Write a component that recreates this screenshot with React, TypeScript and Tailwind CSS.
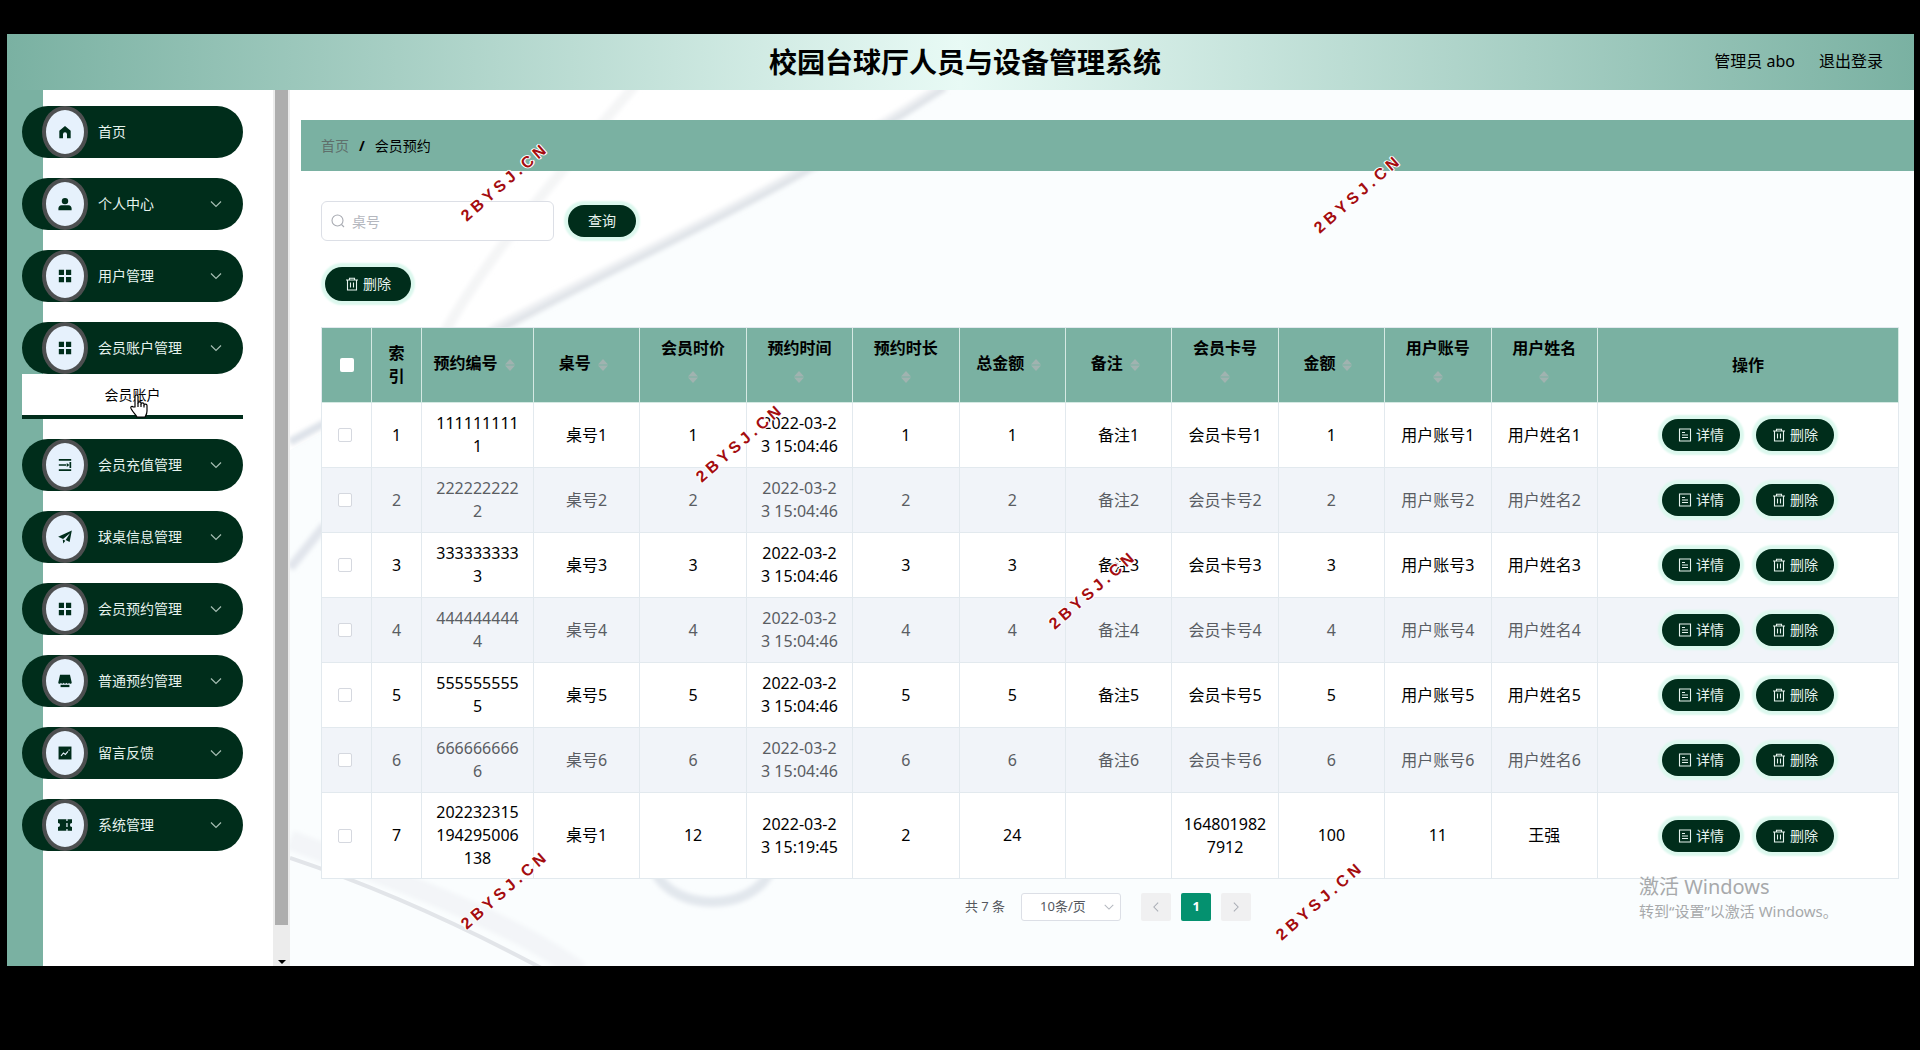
import { ComponentType, FC, memo, ReactNode } from "react";
import clsx from "clsx";

type IconProps = { className?: string };

const SolidIcon: FC<{ children: ReactNode }> = ({ children }) => (
  <svg aria-hidden className="size-3.5" fill="currentColor" viewBox="0 0 1024 1024">
    {children}
  </svg>
);

const HomeIcon = () => (
  <SolidIcon>
    <path d="M512 64 96 420v540h270V680a146 146 0 0 1 292 0v280h270V420z" />
  </SolidIcon>
);

const UserIcon = () => (
  <SolidIcon>
    <circle cx="512" cy="300" r="236" />
    <path d="M30 960V840c0-130 90-240 220-240h524c130 0 220 110 220 240v120z" />
  </SolidIcon>
);

const GridIcon = () => (
  <SolidIcon>
    <path d="M60 60h380v380H60zM584 60h380v380H584zM60 584h380v380H60zM584 584h380v380H584z" />
  </SolidIcon>
);

const ListIcon = () => (
  <SolidIcon>
    <path d="M60 80h904v130H60zM60 450h540v124H60zM60 820h904v130H60zM840 290h124v450H840z" />
    <path d="M640 370v284l190-142z" />
  </SolidIcon>
);

const SendIcon = () => (
  <SolidIcon>
    <path d="M10 500 1010 40 850 870 560 740 880 230 370 650zM350 700l190 90-160 190z" />
  </SolidIcon>
);

const ShopIcon = () => (
  <SolidIcon>
    <path d="M150 60h724l130 560c0 60-40 90-90 90s-90-30-100-70c-20 40-60 70-100 70s-80-30-100-70c-20 40-60 70-102 70s-80-30-102-70c-20 40-60 70-100 70s-80-30-100-70c-10 40-50 70-100 70S20 680 20 620z" />
    <path d="M190 790h644v170H190z" />
  </SolidIcon>
);

const ChartIcon = () => (
  <SolidIcon>
    <path d="M40 40h944v944H40z" />
    <path
      d="M220 720 400 510l140 110 190-220M780 340l60-70"
      fill="none"
      stroke="#e6f1fc"
      strokeWidth="80"
    />
  </SolidIcon>
);

const TicketIcon = () => (
  <SolidIcon>
    <path d="M0 90h610v130h90V90h324v270a152 152 0 0 0 0 304v270H700V804h-90v130H0V664a152 152 0 0 0 0-304zM610 360v304h90V360z" />
  </SolidIcon>
);

const ChevronIcon: FC<IconProps> = ({ className }) => (
  <svg
    aria-hidden
    className={className}
    fill="none"
    stroke="currentColor"
    strokeWidth="1.2"
    viewBox="0 0 14 14"
  >
    <path d="m2 4.5 5 5 5-5" />
  </svg>
);

const TrashIcon = () => (
  <svg
    aria-hidden
    className="size-3.5"
    fill="none"
    stroke="currentColor"
    strokeWidth="1.1"
    viewBox="0 0 14 14"
  >
    <path d="M1 3h12M4.500 3V1.200h5V3M2.500 3v10h9V3M5.500 5.500v5M8.500 5.500v5" />
  </svg>
);

const DocumentIcon = () => (
  <svg
    aria-hidden
    className="size-3.5"
    fill="none"
    stroke="currentColor"
    strokeWidth="1.1"
    viewBox="0 0 14 14"
  >
    <path d="M1.500 1h11v12h-11zM4 4.500h3M4 7h6M4 9.500h6" />
  </svg>
);

const SearchIcon: FC<IconProps> = ({ className }) => (
  <svg
    aria-hidden
    className={className}
    fill="none"
    stroke="currentColor"
    strokeWidth="1.1"
    viewBox="0 0 14 14"
  >
    <circle cx="6.5" cy="6.5" r="5.5" />
    <path d="m10.500 10.500 2.500 2.500" />
  </svg>
);

const SortCaret = () => (
  <span className="inline-flex h-[34px] w-6 items-center justify-center align-middle">
    <svg aria-hidden className="h-3 w-2.5" fill="#a0b3b0" viewBox="0 0 10 12">
      <path d="M5 0l5 5.500H0zM5 12 0 6.500h10z" />
    </svg>
  </span>
);

type MenuEntry = {
  label: string;
  icon: ComponentType;
  leaf?: boolean;
  child?: string;
};

const menu: MenuEntry[] = [
  { label: "首页", icon: HomeIcon, leaf: true },
  { label: "个人中心", icon: UserIcon },
  { label: "用户管理", icon: GridIcon },
  { label: "会员账户管理", icon: GridIcon, child: "会员账户" },
  { label: "会员充值管理", icon: ListIcon },
  { label: "球桌信息管理", icon: SendIcon },
  { label: "会员预约管理", icon: GridIcon },
  { label: "普通预约管理", icon: ShopIcon },
  { label: "留言反馈", icon: ChartIcon },
  { label: "系统管理", icon: TicketIcon },
];

const columns = [
  "预约编号",
  "桌号",
  "会员时价",
  "预约时间",
  "预约时长",
  "总金额",
  "备注",
  "会员卡号",
  "金额",
  "用户账号",
  "用户姓名",
];

const CARD_COLUMN = 7;

const rows: string[][] = [
  ...[1, 2, 3, 4, 5, 6].map((n) => [
    `${n}`.repeat(10),
    `桌号${n}`,
    `${n}`,
    "2022-03-23 15:04:46",
    `${n}`,
    `${n}`,
    `备注${n}`,
    `会员卡号${n}`,
    `${n}`,
    `用户账号${n}`,
    `用户姓名${n}`,
  ]),
  [
    "202232315194295006138",
    "桌号1",
    "12",
    "2022-03-23 15:19:45",
    "2",
    "24",
    "",
    "1648019827912",
    "100",
    "11",
    "王强",
  ],
];

const watermarks = [
  "left-[505px] top-[182px]",
  "left-[1358px] top-[194px]",
  "left-[740px] top-[443px]",
  "left-[1093px] top-[590px]",
  "left-[505px] top-[890px]",
  "left-[1320px] top-[901px]",
];

const PillButton: FC<{ children: ReactNode; className?: string }> = ({
  children,
  className,
}) => (
  <button
    className={clsx(
      "inline-flex items-center gap-1 rounded-full bg-[#002d1b] text-sm text-[#e6f3ee] shadow-[0_0_2px_4px_#dcf8ee]",
      className
    )}
    type="button"
  >
    {children}
  </button>
);

const Header = memo(() => (
  <header className="grid h-14 grid-cols-[1fr_auto_1fr] items-center bg-[linear-gradient(to_right,#7ab1a2,#e8faf5,#7ab1a2)] pr-[31px] pl-10">
    <h1 className="col-start-2 text-[28px] leading-10 font-bold">
      校园台球厅人员与设备管理系统
    </h1>
    <div className="flex justify-end gap-6 pb-0.5 text-base">
      <span>管理员 abo</span>
      <a href="#logout">退出登录</a>
    </div>
  </header>
));

const HandCursor = () => (
  <svg
    aria-hidden
    className="absolute top-5 left-[107px] h-6 w-5"
    fill="#fff"
    stroke="#000"
    strokeLinejoin="round"
    strokeWidth="1.2"
    viewBox="0 0 20 24"
  >
    <path d="M6 13V2.500a1.500 1.500 0 0 1 3 0V9c0-1.500 3-1.500 3 0v1c0-1.500 3-1.500 3 0v1c0-1.300 3-1.300 3 .5V17c0 3-1 4-2 6H8c-1-2-4-4.500-6-8.500-.8-1.800 1-2.800 2.300-1.500z" />
    <path d="M9 9v4M12 10v3M15 11v2.500" fill="none" />
  </svg>
);

const Sidebar = memo(() => (
  <aside className="flex w-[283px] shrink-0 bg-[linear-gradient(to_right,#7ab1a2_36px,#fff_36px)]">
    <nav className="flex flex-1 flex-col gap-5 pt-4 pr-[30px] pl-[15px] text-sm">
      {menu.map(({ label, icon: Icon, leaf, child }) => (
        <div key={label}>
          <button
            className="flex h-[52px] w-full items-center rounded-full bg-[#002d1b] pr-5 pl-5 text-[#e6f3ee]"
            type="button"
          >
            <span className="flex h-full w-[46px] items-center justify-center rounded-[50%] border-4 border-[#4d4f50] bg-[#e6f1fc] text-[#002d1b]">
              <Icon />
            </span>
            <span className="flex-1 pl-2.5 text-left">{label}</span>
            {leaf ? null : (
              <ChevronIcon className="size-3.5 text-[#a5bdb3]" />
            )}
          </button>
          {child ? (
            <div className="relative border-b-4 border-[#002d1b] bg-white">
              <a
                className="flex h-[41px] items-center justify-center text-black"
                href="#account"
              >
                {child}
              </a>
              <HandCursor />
            </div>
          ) : null}
        </div>
      ))}
    </nav>
    <div className="flex w-[17px] flex-col bg-[#ececec] px-0.5">
      <div className="flex-1 bg-[#aeaeae]" />
      <div className="flex h-[41px] items-end justify-center pb-0.5">
        <svg aria-hidden className="h-1 w-2" viewBox="0 0 8 4">
          <path d="M0 0h8L4 4z" />
        </svg>
      </div>
    </div>
  </aside>
));

const Backdrop = () => (
  <svg
    aria-hidden
    className="absolute inset-0 -z-10 h-full w-full"
    fill="none"
    preserveAspectRatio="xMinYMin slice"
    viewBox="0 0 1624 876"
  >
    <defs>
      <filter id="soft">
        <feGaussianBlur stdDeviation="2" />
      </filter>
    </defs>
    <path d="M0 0h650L0 360z" fill="#fff" />
    <g filter="url(#soft)">
      <path d="M655-5C480 110 320 175 200 242" stroke="#eef0f3" strokeWidth="10" />
      <path d="M655-2C480 113 325 175 200 246" stroke="#dfe3e8" strokeWidth="6" />
      <path d="M345-5C290 60 200 160 155 242" stroke="#f4f5f6" strokeWidth="10" />
      <path d="M0 352 35 333" stroke="#dde2e9" strokeWidth="8" />
      <path d="M0 478 35 435" stroke="#e1e5ec" strokeWidth="9" />
      <path d="M0 750c110 42 220 80 290 132" stroke="#f3f5f8" strokeWidth="20" />
      <path d="M365 782c20 40 95 40 115 0" stroke="#e2e7ed" strokeWidth="10" />
    </g>
    <path d="M0 768c90 30 180 72 255 112" stroke="#e2e5e9" strokeWidth="4" />
  </svg>
);

const BookingTable = memo(() => (
  <table className="mt-[26px] w-full table-fixed border-separate border-spacing-0 border-t border-l border-[#e2e9ee] text-center text-base leading-[23px]">
    <colgroup>
      <col className="w-[50px]" />
      <col className="w-[50px]" />
      <col className="w-28" />
      {columns.slice(1).map((c) => (
        <col key={c} />
      ))}
      <col className="w-[301px]" />
    </colgroup>
    <thead>
      <tr className="h-[75px] bg-[#7ab1a2]">
        <th className="border-r border-b border-[#d5e9e3]">
          <input
            aria-label="全选"
            className="mx-auto block size-3.5 appearance-none rounded-xs bg-white"
            type="checkbox"
          />
        </th>
        <th className="border-r border-b border-[#d5e9e3] px-3 font-bold">
          索引
        </th>
        {columns.map((c) => (
          <th
            className="border-r border-b border-[#d5e9e3] px-2.5 font-bold"
            key={c}
          >
            {c}
            <SortCaret />
          </th>
        ))}
        <th className="border-r border-b border-[#d5e9e3] font-bold">操作</th>
      </tr>
    </thead>
    <tbody>
      {rows.map((row, index) => (
        <tr
          className="h-[65px] bg-white text-black even:bg-[#f1f4f9] even:text-[#5a5d63]"
          key={row[0]}
        >
          <td className="border-r border-b border-[#e2e9ee] pr-1">
            <input
              aria-label={`选择第${index + 1}行`}
              className="mx-auto block size-3.5 appearance-none rounded-xs border border-[#d5d8df] bg-white"
              type="checkbox"
            />
          </td>
          <td className="border-r border-b border-[#e2e9ee]">{index + 1}</td>
          {row.map((value, i) => (
            <td
              className={clsx(
                "border-r border-b border-[#e2e9ee] py-2 break-all",
                i === CARD_COLUMN ? "px-2" : "px-3"
              )}
              key={columns[i]}
            >
              {value}
            </td>
          ))}
          <td className="border-r border-b border-[#e2e9ee]">
            <div className="flex justify-center gap-4">
              <PillButton className="h-8 px-4">
                <DocumentIcon />
                详情
              </PillButton>
              <PillButton className="h-8 px-4">
                <TrashIcon />
                删除
              </PillButton>
            </div>
          </td>
        </tr>
      ))}
    </tbody>
  </table>
));

const Pagination = () => (
  <div className="mt-3.5 flex items-center justify-center pr-1 text-[13px] text-[#55585e]">
    <span className="pr-4">共 7 条</span>
    <div className="relative">
      <select
        aria-label="每页条数"
        className="block h-7 w-[100px] appearance-none rounded-[3px] border border-[#dcdfe6] bg-white pl-[18px]"
      >
        <option>10条/页</option>
      </select>
      <ChevronIcon className="pointer-events-none absolute top-2 right-1.5 size-3 text-[#b4b8bf]" />
    </div>
    <div className="flex gap-2.5 pl-5">
      <button
        aria-label="上一页"
        className="flex h-7 w-[30px] items-center justify-center rounded-xs bg-[#f0f0f1] text-[#a9adb5]"
        type="button"
      >
        <ChevronIcon className="size-3 rotate-90" />
      </button>
      <button
        className="h-7 w-[30px] rounded-xs bg-[#04916f] font-bold text-white"
        type="button"
      >
        1
      </button>
      <button
        aria-label="下一页"
        className="flex h-7 w-[30px] items-center justify-center rounded-xs bg-[#f0f0f1] text-[#a9adb5]"
        type="button"
      >
        <ChevronIcon className="size-3 -rotate-90" />
      </button>
    </div>
  </div>
);

const App = () => (
  <div className="relative min-h-screen overflow-hidden bg-black pt-[34px] pr-1.5 pb-[84px] pl-[7px] font-['Noto_Sans','Noto_Sans_CJK_SC',sans-serif] text-black">
    <Header />
    <div className="flex">
      <Sidebar />
      <main className="relative isolate min-w-0 flex-1 bg-[#fafdfe] pt-[30px] pb-[45px] pl-[11px]">
        <Backdrop />
        <nav
          aria-label="面包屑"
          className="flex h-[51px] items-center gap-2.5 bg-[#7ab1a2] pl-5 text-sm"
        >
          <a className="text-[#5f6f6b]" href="#home">
            首页
          </a>
          <span className="font-bold">/</span>
          <span>会员预约</span>
        </nav>
        <div className="pt-[30px] pr-[15px] pl-5">
          <form className="flex items-center gap-3.5">
            <div className="relative">
              <SearchIcon className="absolute top-[13px] left-2.5 size-3.5 text-[#a8abb2]" />
              <input
                aria-label="桌号"
                className="block h-10 w-[233px] rounded-md border border-[#dcdfe6] bg-white pl-[30px] text-sm placeholder:text-[#b4b7be]"
                placeholder="桌号"
                type="text"
              />
            </div>
            <PillButton className="h-8 px-5">查询</PillButton>
          </form>
          <div className="flex pt-[26px] pl-1">
            <PillButton className="h-[34px] px-5">
              <TrashIcon />
              删除
            </PillButton>
          </div>
          <BookingTable />
          <Pagination />
        </div>
      </main>
    </div>

    <div className="pointer-events-none absolute top-[873px] right-20 w-[201px] text-[#a7a9ab]">
      <p className="text-xl leading-7">激活 Windows</p>
      <p className="text-[15px] leading-5 whitespace-nowrap">
        转到“设置”以激活 Windows。
      </p>
    </div>

    {watermarks.map((place) => (
      <span
        className={clsx(
          "pointer-events-none absolute -translate-1/2 -rotate-41 font-['Liberation_Sans',sans-serif] text-base font-bold tracking-[4px] text-[#a40d10] [text-shadow:1px_0_#fff,-1px_0_#fff,0_1px_#fff,0_-1px_#fff,1px_1px_#fff,-1px_-1px_#fff]",
          place
        )}
        key={place}
      >
        2BYSJ.CN
      </span>
    ))}
  </div>
);

export default App;
